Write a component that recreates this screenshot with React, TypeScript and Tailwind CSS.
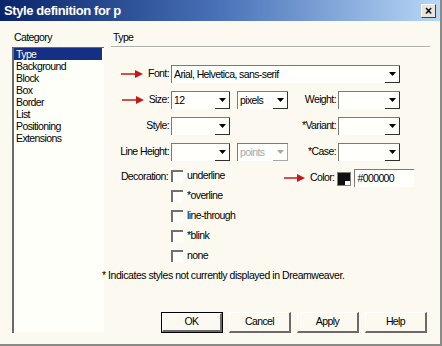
import React from "react";

const FONT = "font-['Liberation_Sans',Arial,sans-serif]";

function Arrow({ w = 22 }: { w?: number }) {
  return (
    <svg width={w} height="8" viewBox={`0 0 ${w} 8`} className="shrink-0">
      <line x1="0" y1="4" x2={w - 6} y2="4" stroke="#c41818" strokeWidth="1.5" />
      <polygon points={`${w - 8},0 ${w},4 ${w - 8},8`} fill="#c41818" />
    </svg>
  );
}

function Select({ w, value = "", disabled = false }: { w: string; value?: string; disabled?: boolean }) {
  return (
    <div className={`${w} h-[18px] shrink-0 flex border-t border-l border-[#7a7a7a] bg-[#fffffb]`}>
      <div className={`flex-1 pl-[2px] leading-[16px] whitespace-nowrap overflow-hidden ${disabled ? "text-[#a8a8a8]" : "text-black"}`}>{value}</div>
      <div className={`w-[15px] h-[17px] flex items-center justify-center border-r border-b ${disabled ? "border-[#a8a8a8]" : "border-[#303030]"}`}>
        <svg width="7" height="4" viewBox="0 0 7 4">
          <polygon points="0,0 7,0 3.5,4" fill={disabled ? "#a8a8a8" : "#000"} />
        </svg>
      </div>
    </div>
  );
}

function Check({ label }: { label: string }) {
  return (
    <div className="flex items-center h-[20px] whitespace-nowrap">
      <div className="w-[12px] h-[12px] shrink-0 border-t-2 border-l-2 border-t-[#707070] border-l-[#707070] bg-[#fffffb]" />
      <span className="ml-[4px]">{label}</span>
    </div>
  );
}

function Btn({ label, def = false }: { label: string; def?: boolean }) {
  return (
    <div className={`w-[62px] h-[21px] ${def ? "border border-black" : ""}`}>
      <div className="w-full h-full flex items-center justify-center border-t border-l border-t-white border-l-white border-r-2 border-b-2 border-r-[#6a6a6a] border-b-[#6a6a6a] bg-[#fcfaf0]">
        {label}
      </div>
    </div>
  );
}

export default function App() {
  const cats = ["Type", "Background", "Block", "Box", "Border", "List", "Positioning", "Extensions"];
  return (
    <div className={`w-[442px] h-[346px] bg-[#fcfaf0] border-r-2 border-b-2 border-[#8a8a8a] flex flex-col text-[10.5px] tracking-[-0.6px] text-black ${FONT}`}>
      <div className="h-[21px] shrink-0 flex items-center justify-between bg-gradient-to-r from-[#0a246a] via-[#4a72b8] to-[#b9d8f6] pl-[4px] pr-[4px]">
        <span className="text-white font-bold text-[13px] tracking-[-0.4px] leading-none">Style definition for p</span>
        <div className="w-[15px] h-[14px] bg-[#e8e6dc] border-t border-l border-t-white border-l-white border-r border-b border-r-[#404040] border-b-[#404040] flex items-center justify-center text-[12px] tracking-normal font-bold leading-none">
          ×
        </div>
      </div>
      <div className="flex flex-1">
        <div className="w-[104px] shrink-0 pl-[12px] pt-[10px] pb-[11px] flex flex-col">
          <div className="h-[12px] leading-[12px] pl-[2px]">Category</div>
          <div className="mt-[4px] flex-1 border-l-2 border-t border-[#6a6a6a] bg-[#fffffa] pr-[2px]">
            {cats.map((c, i) => (
              <div
                key={c}
                className={`h-[12px] leading-[12px] pl-[2px] ${i === 0 ? "bg-[#142f84] text-white" : ""}`}
              >
                {c}
              </div>
            ))}
          </div>
        </div>
        <div className="flex-1 pt-[10px] pr-[10px] flex flex-col whitespace-nowrap">
          <div className="h-[12px] leading-[12px] pl-[9px]">Type</div>
          <div className="ml-[7px] mt-[3px] border-t border-b border-t-[#b0b0b0] border-b-white" />
          <div className="mt-[17px] flex flex-col gap-[8px]">
            <div className="flex items-center h-[18px]">
              <div className="w-[67px] flex items-center justify-end pr-[2px]">
                <Arrow />
                <span className="ml-[5px]">Font:</span>
              </div>
              <Select w="w-[229px]" value="Arial, Helvetica, sans-serif" />
            </div>
            <div className="flex items-center h-[18px]">
              <div className="w-[67px] flex items-center justify-end pr-[2px]">
                <Arrow />
                <span className="ml-[5px]">Size:</span>
              </div>
              <Select w="w-[59px]" value="12" />
              <div className="ml-[7px]">
                <Select w="w-[51px]" value="pixels" />
              </div>
              <div className="w-[50px] text-right pr-[2px]">Weight:</div>
              <Select w="w-[62px]" />
            </div>
            <div className="flex items-center h-[18px]">
              <div className="w-[67px] text-right pr-[2px]">Style:</div>
              <Select w="w-[59px]" />
              <div className="w-[108px] text-right pr-[2px]">*Variant:</div>
              <Select w="w-[62px]" />
            </div>
            <div className="flex items-center h-[18px]">
              <div className="w-[67px] text-right pr-[2px]">Line Height:</div>
              <Select w="w-[59px]" />
              <div className="ml-[7px]">
                <Select w="w-[51px]" value="points" disabled />
              </div>
              <div className="w-[50px] text-right pr-[2px]">*Case:</div>
              <Select w="w-[62px]" />
            </div>
          </div>
          <div className="mt-[5px] flex">
            <div className="w-[67px] h-[20px] leading-[20px] text-right pr-[3px]">Decoration:</div>
            <div className="w-[113px] flex flex-col">
              <Check label="underline" />
              <Check label="*overline" />
              <Check label="line-through" />
              <Check label="*blink" />
              <Check label="none" />
            </div>
            <div className="mt-[3px] flex items-center h-[18px] self-start">
              <Arrow w={21} />
              <span className="ml-[5px]">Color:</span>
              <div className="ml-[3px] w-[14px] h-[14px] border border-[#808080] bg-[#101010] relative mt-[2px]">
                <div className="absolute right-0 bottom-0 w-[5px] h-[4px] bg-white" />
              </div>
              <div className="ml-[3px] w-[60px] h-[18px] border-t border-l border-[#7a7a7a] bg-[#fffffb] pl-[2px] leading-[16px]">
                #000000
              </div>
            </div>
          </div>
          <div className="mt-[2px] ml-[-2px] tracking-[-0.45px]">* Indicates styles not currently displayed in Dreamweaver.</div>
          <div className="mt-[28px] flex gap-[6px] pl-[57px]">
            <Btn label="OK" def />
            <Btn label="Cancel" />
            <Btn label="Apply" />
            <Btn label="Help" />
          </div>
        </div>
      </div>
    </div>
  );
}
